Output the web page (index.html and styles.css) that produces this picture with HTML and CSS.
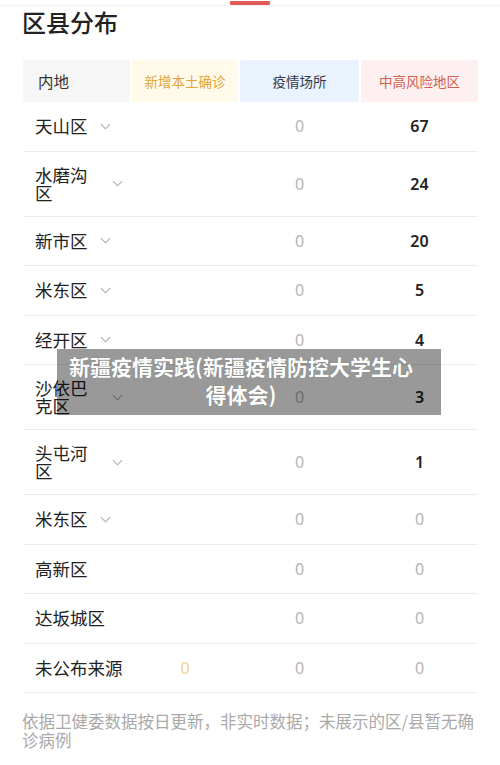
FILE: index.html
```html
<!DOCTYPE html>
<html lang="zh-CN">
<head>
<meta charset="utf-8">
<link rel="stylesheet" href="styles.css">
</head>
<body>
<div class="tabbar"><span class="tab-indicator"></span></div>
<main class="page">
  <h1 class="title">区县分布</h1>
  <div class="table">
    <div class="head">
      <div class="hc hc-area">内地</div>
      <div class="hc hc-new">新增本土确诊</div>
      <div class="hc hc-place">疫情场所</div>
      <div class="hc hc-risk">中高风险地区</div>
    </div>

    <div class="row">
      <div class="name"><span class="nm">天山区</span><svg class="chev" viewBox="0 0 12 7"><polyline points="1,1 6,6 11,1"/></svg></div>
      <div class="v"></div><div class="v zero">0</div><div class="v strong">67</div>
    </div>
    <div class="row tall">
      <div class="name"><span class="nm wrap">水磨沟区</span><svg class="chev" viewBox="0 0 12 7"><polyline points="1,1 6,6 11,1"/></svg></div>
      <div class="v"></div><div class="v zero">0</div><div class="v strong">24</div>
    </div>
    <div class="row">
      <div class="name"><span class="nm">新市区</span><svg class="chev" viewBox="0 0 12 7"><polyline points="1,1 6,6 11,1"/></svg></div>
      <div class="v"></div><div class="v zero">0</div><div class="v strong">20</div>
    </div>
    <div class="row">
      <div class="name"><span class="nm">米东区</span><svg class="chev" viewBox="0 0 12 7"><polyline points="1,1 6,6 11,1"/></svg></div>
      <div class="v"></div><div class="v zero">0</div><div class="v strong">5</div>
    </div>
    <div class="row">
      <div class="name"><span class="nm">经开区</span><svg class="chev" viewBox="0 0 12 7"><polyline points="1,1 6,6 11,1"/></svg></div>
      <div class="v"></div><div class="v zero">0</div><div class="v strong">4</div>
    </div>
    <div class="row tall">
      <div class="name"><span class="nm wrap">沙依巴克区</span><svg class="chev" viewBox="0 0 12 7"><polyline points="1,1 6,6 11,1"/></svg></div>
      <div class="v"></div><div class="v zero">0</div><div class="v strong">3</div>
    </div>
    <div class="row tall">
      <div class="name"><span class="nm wrap">头屯河区</span><svg class="chev" viewBox="0 0 12 7"><polyline points="1,1 6,6 11,1"/></svg></div>
      <div class="v"></div><div class="v zero">0</div><div class="v strong">1</div>
    </div>
    <div class="row">
      <div class="name"><span class="nm">米东区</span><svg class="chev" viewBox="0 0 12 7"><polyline points="1,1 6,6 11,1"/></svg></div>
      <div class="v"></div><div class="v zero">0</div><div class="v zero">0</div>
    </div>
    <div class="row">
      <div class="name"><span class="nm">高新区</span></div>
      <div class="v"></div><div class="v zero">0</div><div class="v zero">0</div>
    </div>
    <div class="row">
      <div class="name"><span class="nm">达坂城区</span></div>
      <div class="v"></div><div class="v zero">0</div><div class="v zero">0</div>
    </div>
    <div class="row">
      <div class="name"><span class="nm">未公布来源</span></div>
      <div class="v yellow">0</div><div class="v zero">0</div><div class="v zero">0</div>
    </div>
  </div>
  <p class="note">依据卫健委数据按日更新，非实时数据；未展示的区/县暂无确诊病例</p>
</main>
<div class="overlay">新疆疫情实践(新疆疫情防控大学生心得体会)</div>
</body>
</html>
```

FILE: styles.css
```css
* { box-sizing: border-box; }
html, body { margin: 0; padding: 0; background: #fff; }
body {
  width: 500px;
  height: 765px;
  overflow: hidden;
  position: relative;
  font-family: "Noto Sans CJK SC", "Noto Sans", sans-serif;
  color: #222;
}
.tabbar {
  height: 6px;
  border-bottom: 1px solid #f0f0f0;
  display: flex;
  justify-content: center;
  padding-top: 1px;
}
.tab-indicator {
  display: block;
  width: 40px;
  height: 4px;
  background: #e05a58;
  border-radius: 1px;
}
.page { padding: 0 22px 0 23px; }
.title {
  margin: 0 0 0 -1px;
  font-size: 24px;
  line-height: 32px;
  font-weight: 500;
  color: #222;
}
.table { margin-top: 22px; }
.head, .row {
  display: grid;
  grid-template-columns: 107px 106px 119px 117px;
  column-gap: 2px;
}
.head { height: 42px; }
.hc {
  display: flex;
  align-items: center;
  justify-content: center;
  font-size: 13.5px;
  border-radius: 2px;
}
.hc-area { justify-content: flex-start; padding-left: 15px; background: #f6f6f6; font-size: 15.5px; color: #333; }
.hc-new { background: #fffaea; color: #e2a63a; }
.hc-place { background: #eaf2fe; color: #2f3b4a; }
.hc-risk { background: #fef0f0; color: #cf5f4f; }
.row {
  min-height: 49.5px;
  border-bottom: 1px solid #ececec;
  align-items: center;
}
.row.tall { padding: 14px 0; }
.name {
  display: flex;
  align-items: center;
  padding-left: 12px;
}
.nm {
  font-size: 17.5px;
  line-height: 18px;
  color: #222;
  white-space: nowrap;
}
.nm.wrap { white-space: normal; width: 65px; }
.chev {
  width: 11px;
  height: 7px;
  margin-left: 12px;
  fill: none;
  stroke: #a8a8a8;
  stroke-width: 1.1;
}
.v {
  text-align: center;
  font-family: "Noto Sans", "Liberation Sans", sans-serif;
  font-size: 16px;
  line-height: 20px;
}
.v.zero { color: #b5b5b5; }
.v.yellow { color: #f1d48c; }
.v.strong { color: #222; font-weight: 600; }
.note {
  margin: 19px 0 0 -1px;
  font-size: 16.5px;
  line-height: 19px;
  color: #a9a9a9;
}
.overlay {
  position: absolute;
  left: 57px;
  top: 349px;
  width: 384px;
  height: 66px;
  padding: 3px 20px 0 4px;
  background: rgba(0, 0, 0, 0.4);
  color: #fff;
  font-size: 21px;
  line-height: 28px;
  font-weight: 700;
  text-align: center;
  text-shadow: 0 0 1px rgba(0,0,0,0.3);
}
```
